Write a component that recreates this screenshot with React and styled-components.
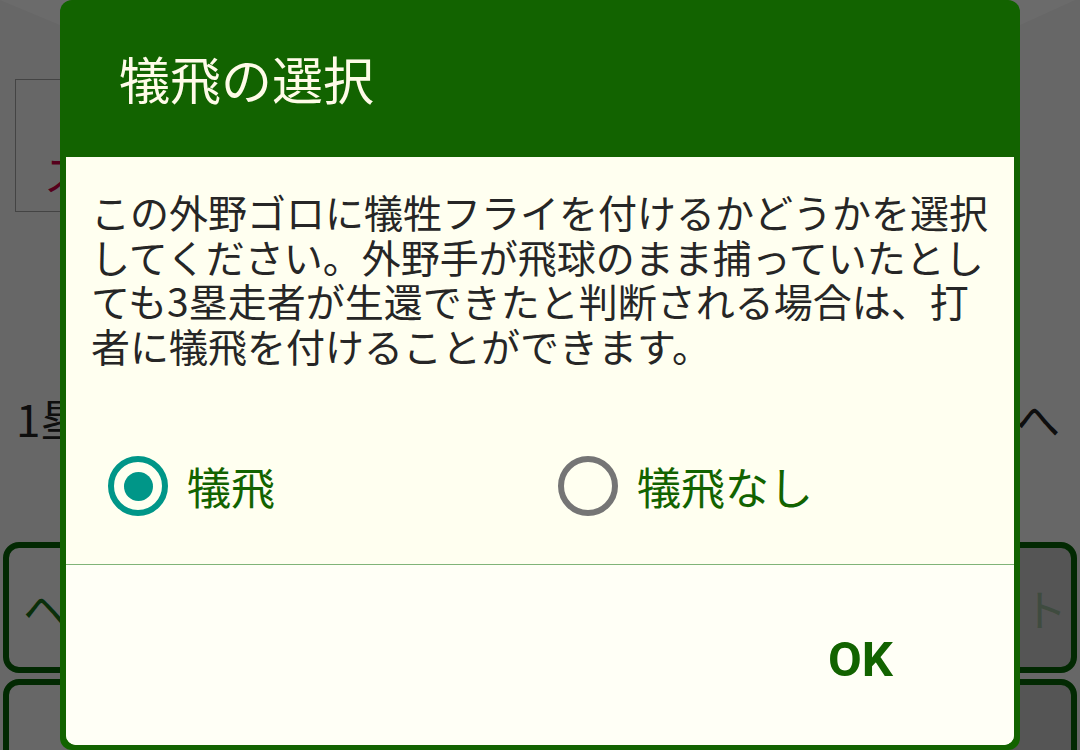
import React, { useState } from 'react';
import styled, { createGlobalStyle } from 'styled-components';

const GlobalStyle = createGlobalStyle`
  html, body {
    margin: 0;
    padding: 0;
    width: 1080px;
    height: 750px;
    overflow: hidden;
  }
  body {
    font-family: 'Noto Sans CJK JP', 'Noto Sans', sans-serif;
    background: #f5f5f5;
  }
  * {
    box-sizing: border-box;
  }
`;

// ---- page behind the dialog ----

const Page = styled.div`
  width: 1080px;
  height: 750px;
  display: flex;
  flex-direction: column;
  background: #f5f5f5;
  overflow: hidden;
`;

const TopBand = styled.svg`
  display: block;
  width: 1080px;
  height: 25px;
  flex-shrink: 0;
`;

const ScoreBox = styled.div`
  margin: 54px 0 0 15px;
  width: 520px;
  height: 133px;
  flex-shrink: 0;
  border: 1px solid #a2a2a2;
  padding: 62px 0 0 28px;
  font-size: 42px;
  color: #cc0044;
  white-space: nowrap;
`;

const RunnerRow = styled.div`
  display: flex;
  justify-content: space-between;
  margin-top: 174px;
  padding: 0 20px 0 16px;
  font-size: 44px;
  color: #222;
`;

const ButtonGrid = styled.div`
  display: grid;
  grid-template-columns: 1fr 1fr;
  grid-auto-rows: 131px;
  gap: 6px 6px;
  margin-top: 92px;
  padding: 0 3px;
`;

const PlayButton = styled.button`
  display: flex;
  align-items: center;
  justify-content: ${(p) =>
    p.$align === 'right' ? 'flex-end' : p.$align === 'center' ? 'center' : 'flex-start'};
  padding: ${(p) => (p.$align === 'right' ? '0 4px 0 0' : p.$align === 'center' ? '0' : '0 0 0 14px')};
  border: 6px solid #066206;
  border-radius: 16px;
  background: ${(p) => (p.disabled ? '#cacaca' : '#f5f5f5')};
  color: ${(p) => (p.disabled ? '#96b496' : '#187018')};
  font-family: 'Noto Sans CJK JP', sans-serif;
  font-size: 44px;
  white-space: nowrap;
  overflow: hidden;
`;

// ---- dialog ----

const Scrim = styled.div`
  position: fixed;
  inset: 0;
  background: rgba(0, 0, 0, 0.58);
  display: flex;
  justify-content: center;
  align-items: flex-start;
`;

const Dialog = styled.div`
  width: 960px;
  height: 750px;
  display: flex;
  flex-direction: column;
  padding: 0 6px 5px;
  background: #126300;
  border-radius: 12px;
`;

const Header = styled.div`
  height: 157px;
  flex-shrink: 0;
  display: flex;
  align-items: center;
  padding-left: 53px;
`;

const Title = styled.h1`
  margin: 0;
  font-size: 51px;
  font-weight: 400;
  line-height: 1.2;
  color: #fffbe8;
`;

const Body = styled.div`
  flex: 1;
  display: flex;
  flex-direction: column;
  background: #fffff0;
  border-radius: 0 0 10px 10px;
  overflow: hidden;
`;

const Message = styled.p`
  margin: 0;
  padding: 32px 20px 0 25px;
  font-size: 39px;
  line-height: 44.5px;
  color: #262626;
`;

const RadioGroup = styled.div`
  display: flex;
  margin-top: 89px;
  padding: 0 24px;
`;

const Option = styled.label`
  flex: 1;
  display: flex;
  align-items: center;
  gap: 19px;
  height: 60px;
  padding-left: 18px;
  cursor: pointer;
`;

const RadioRing = styled.span`
  width: 60px;
  height: 60px;
  flex-shrink: 0;
  display: grid;
  place-items: center;
  border: 6px solid ${(p) => (p.$checked ? '#009688' : '#757575')};
  border-radius: 50%;
`;

const RadioDot = styled.span`
  width: 29px;
  height: 29px;
  border-radius: 50%;
  background: #009688;
`;

const OptionLabel = styled.span`
  font-size: 44px;
  line-height: 1;
  color: #126300;
`;

const Divider = styled.hr`
  margin: 48px 0 0;
  border: 0;
  height: 1px;
  background: #80b478;
`;

const Footer = styled.div`
  flex: 1;
  display: flex;
  justify-content: flex-end;
  align-items: flex-start;
  padding: 62px 105px 0 0;
  background: #fffff6;
`;

const OkButton = styled.button`
  padding: 8px 16px;
  border: 0;
  background: none;
  font-family: Roboto, 'Liberation Sans', sans-serif;
  font-size: 49px;
  font-weight: 700;
  line-height: 49px;
  color: #126300;
  cursor: pointer;
`;

const options = ['犠飛', '犠飛なし'];

export default function App() {
  const [choice, setChoice] = useState(0);

  return (
    <>
      <GlobalStyle />
      <Page lang="ja">
        <TopBand viewBox="0 0 1080 25">
          <polygon points="0,0 1075,0 1020,25 60,25" fill="#ffffff" />
        </TopBand>
        <ScoreBox>ストライク</ScoreBox>
        <RunnerRow>
          <span>1塁走者</span>
          <span>2塁へ</span>
        </RunnerRow>
        <ButtonGrid>
          <PlayButton>ヘッドスライディング</PlayButton>
          <PlayButton $align="right" disabled>
            タッチアウト
          </PlayButton>
          <PlayButton $align="center">セーフ</PlayButton>
          <PlayButton $align="center" disabled>
            エラー
          </PlayButton>
        </ButtonGrid>
      </Page>

      <Scrim lang="ja">
        <Dialog role="dialog">
          <Header>
            <Title>犠飛の選択</Title>
          </Header>
          <Body>
            <Message>
              この外野ゴロに犠牲フライを付けるかどうかを選択してください。外野手が飛球のまま捕っていたとしても3塁走者が生還できたと判断される場合は、打者に犠飛を付けることができます。
            </Message>
            <RadioGroup role="radiogroup">
              {options.map((label, i) => (
                <Option key={label} onClick={() => setChoice(i)}>
                  <RadioRing $checked={choice === i}>
                    {choice === i && <RadioDot />}
                  </RadioRing>
                  <OptionLabel>{label}</OptionLabel>
                </Option>
              ))}
            </RadioGroup>
            <Divider />
            <Footer>
              <OkButton>OK</OkButton>
            </Footer>
          </Body>
        </Dialog>
      </Scrim>
    </>
  );
}
